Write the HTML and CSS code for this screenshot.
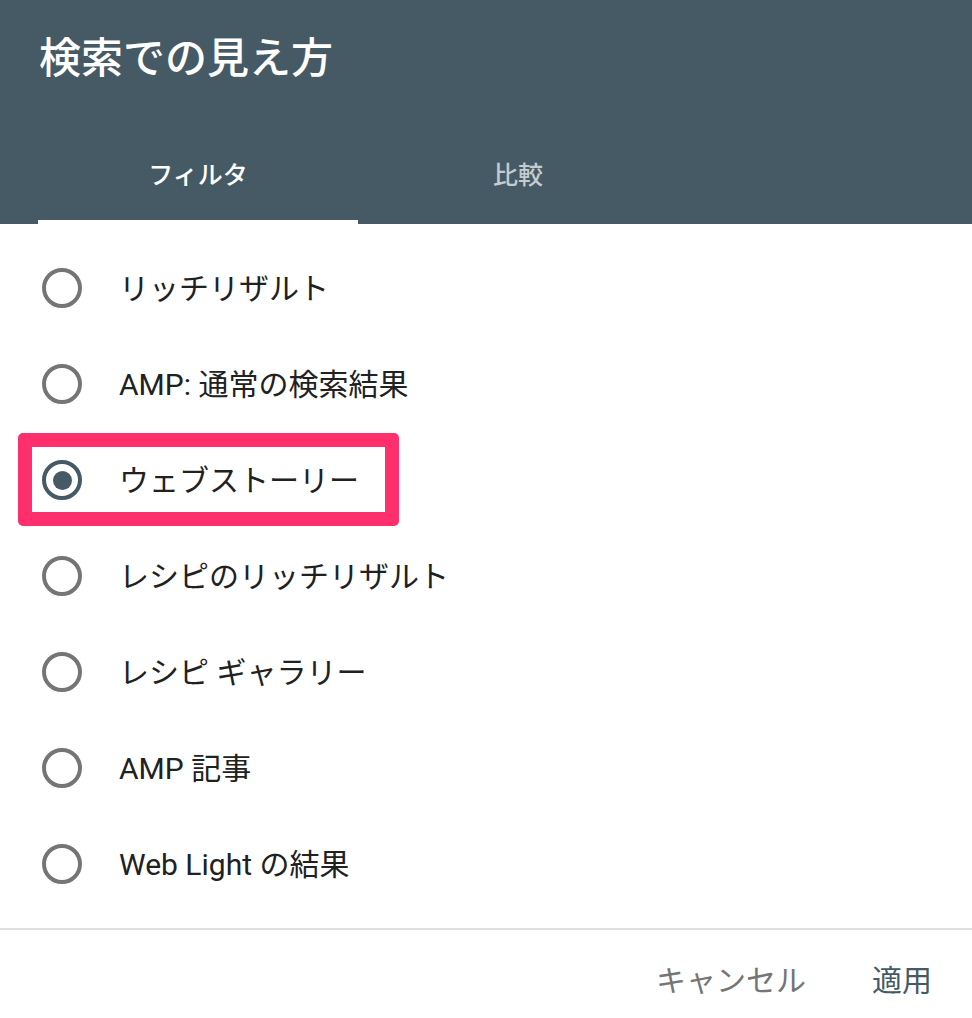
FILE: index.html
```html
<!DOCTYPE html>
<html lang="ja">
<head>
    <meta charset="UTF-8">
    <meta name="viewport" content="width=device-width, initial-scale=1.0">
    <title>検索での見え方</title>
    <link rel="stylesheet" href="styles.css">
</head>
<body>
    <div class="dialog">
        <div class="header">
            <h1 class="title">検索での見え方</h1>
            <div class="tabs">
                <div class="tab active">フィルタ</div>
                <div class="tab">比較</div>
            </div>
        </div>

        <div class="options">
            <label class="option">
                <span class="radio"></span>
                <span class="option-text">リッチリザルト</span>
            </label>
            <label class="option">
                <span class="radio"></span>
                <span class="option-text">AMP: 通常の検索結果</span>
            </label>
            <label class="option selected">
                <span class="radio"></span>
                <span class="option-text">ウェブストーリー</span>
                <span class="highlight"></span>
            </label>
            <label class="option">
                <span class="radio"></span>
                <span class="option-text">レシピのリッチリザルト</span>
            </label>
            <label class="option">
                <span class="radio"></span>
                <span class="option-text">レシピ ギャラリー</span>
            </label>
            <label class="option">
                <span class="radio"></span>
                <span class="option-text">AMP 記事</span>
            </label>
            <label class="option">
                <span class="radio"></span>
                <span class="option-text">Web Light の結果</span>
            </label>
        </div>

        <div class="footer">
            <button class="btn cancel">キャンセル</button>
            <button class="btn apply">適用</button>
        </div>
    </div>
</body>
</html>
```

FILE: styles.css
```css
* {
    margin: 0;
    padding: 0;
    box-sizing: border-box;
    font-family: Roboto, "Noto Sans CJK JP", sans-serif;
}

body {
    background: white;
    width: 972px;
    height: 1018px;
    overflow: hidden;
}

.dialog {
    width: 972px;
}

.header {
    background: #465a65;
    height: 224px;
    display: flex;
    flex-direction: column;
}

.title {
    color: white;
    font-size: 42px;
    font-weight: 500;
    height: 120px;
    line-height: 118px;
    padding-left: 39px;
}

.tabs {
    display: flex;
    padding-left: 38px;
    height: 104px;
}

.tab {
    width: 320px;
    display: flex;
    justify-content: center;
    align-items: center;
    padding-top: 6px;
    border-bottom: 4px solid transparent;
    font-size: 25px;
    font-weight: 500;
    color: rgba(255, 255, 255, 0.7);
}

.tab.active {
    color: white;
    border-bottom-color: white;
}

.options {
    padding: 16px 0;
    border-bottom: 2px solid #e0e0e0;
}

.option {
    position: relative;
    display: flex;
    align-items: center;
    height: 96px;
    padding-left: 42px;
}

.radio {
    width: 40px;
    height: 40px;
    border: 4px solid #757575;
    border-radius: 50%;
    display: flex;
    justify-content: center;
    align-items: center;
    flex-shrink: 0;
}

.option.selected .radio {
    border-color: #465a65;
}

.option.selected .radio::after {
    content: "";
    width: 19px;
    height: 19px;
    border-radius: 50%;
    background: #465a65;
}

.option-text {
    margin-left: 37px;
    margin-bottom: 4px;
    font-size: 30px;
    color: #212121;
}

/* annotation box drawn over the selected row */
.highlight {
    position: absolute;
    left: 18px;
    top: 1px;
    width: 381px;
    height: 93px;
    border: 14px solid #fe2f6c;
    border-radius: 5px;
}

.footer {
    display: flex;
    justify-content: flex-end;
    align-items: center;
    gap: 66px;
    height: 102px;
    padding: 0 40px 6px 0;
}

.btn {
    background: none;
    border: none;
    font-size: 30px;
    font-weight: 400;
    cursor: pointer;
}

.btn.cancel {
    color: #757575;
}

.btn.apply {
    color: #465a65;
}
```
